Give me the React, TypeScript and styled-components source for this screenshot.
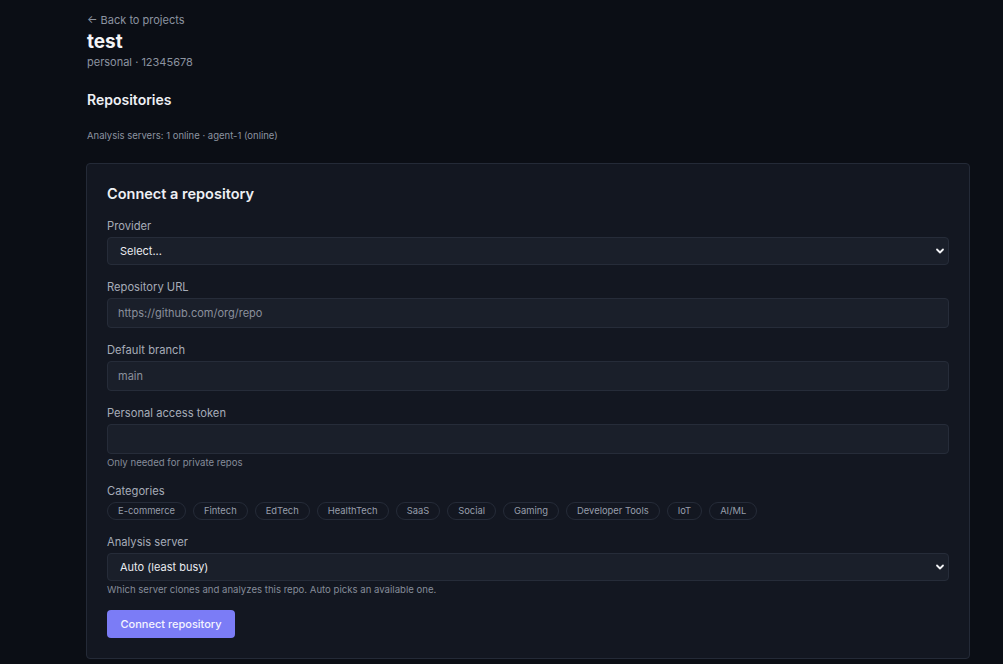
import React from 'react';
import styled, { createGlobalStyle } from 'styled-components';

const GlobalStyle = createGlobalStyle`
    html, body {
        margin: 0;
        padding: 0;
        background: #0b0e15;
    }

    body {
        font-family: Inter, "Noto Sans", "Liberation Sans", sans-serif;
        color: #e6e8ee;
        -webkit-font-smoothing: antialiased;
    }
`;

const Page = styled.main`
    min-height: 664px;
    padding: 12px 33px 4px 86px;
    box-sizing: border-box;
`;

const BackLink = styled.a`
    display: block;
    margin: 1px 0 0 1px;
    font-size: 11px;
    line-height: 14px;
    color: #8c93a0;
    text-decoration: none;
`;

const ProjectTitle = styled.h1`
    margin: 3px 0 0 1px;
    font-size: 19px;
    line-height: 24px;
    font-weight: 700;
    color: #f3f4f7;
`;

const ProjectMeta = styled.div`
    margin: 1px 0 0 1px;
    font-size: 11px;
    line-height: 14px;
    color: #8c93a0;
`;

const SectionTitle = styled.h2`
    margin: 22px 0 0 1px;
    font-size: 14px;
    line-height: 18px;
    font-weight: 600;
    color: #eef0f4;
`;

const ServerStatus = styled.div`
    margin: 21px 0 0 1px;
    font-size: 9.5px;
    line-height: 12px;
    color: #8c93a0;
`;

const Card = styled.section`
    margin-top: 21px;
    padding: 21px 20px 20px;
    background: #131721;
    border: 1px solid #242a37;
    border-radius: 4px;
    display: flex;
    flex-direction: column;
    gap: 15px;
`;

const CardTitle = styled.h3`
    margin: 0 0 1px;
    font-size: 14.5px;
    line-height: 18px;
    font-weight: 600;
    color: #eef0f4;
`;

const Field = styled.div`
    display: flex;
    flex-direction: column;
    gap: 4px;
`;

const Label = styled.label`
    font-size: 11.2px;
    line-height: 14px;
    color: #a6acb8;
`;

const Hint = styled.div`
    margin-top: -1px;
    font-size: 9.6px;
    line-height: 12px;
    color: #858c99;
`;

const controlBase = `
    box-sizing: border-box;
    width: 100%;
    background: #1a1f2a;
    border: 1px solid #262c39;
    border-radius: 4px;
    font-family: Inter, "Noto Sans", "Liberation Sans", sans-serif;
    font-size: 11px;
    outline: none;
`;

const TextInput = styled.input`
    ${controlBase}
    height: 30px;
    padding: 0 10px;
    color: #e6e8ee;

    &::placeholder {
        color: #8a909c;
    }
`;

const SelectWrap = styled.div`
    position: relative;
`;

const Select = styled.select`
    ${controlBase}
    display: block;
    height: 28px;
    padding: 0 28px 0 12px;
    color: #e9ebf0;
    appearance: none;
`;

const Chevron = styled.svg`
    position: absolute;
    right: 4px;
    top: 50%;
    width: 10px;
    height: 10px;
    transform: translateY(-50%);
    pointer-events: none;
`;

const ChipRow = styled.div`
    display: flex;
    flex-wrap: wrap;
    gap: 7px;
`;

const Chip = styled.button<{ $active?: boolean }>`
    height: 18px;
    padding: 0 10px;
    border-radius: 9px;
    border: 1px solid ${p => (p.$active ? '#7b7cf6' : '#252b38')};
    background: ${p => (p.$active ? 'rgba(123, 124, 246, 0.15)' : 'transparent')};
    color: #979eab;
    font-family: Inter, "Noto Sans", "Liberation Sans", sans-serif;
    font-size: 9.4px;
    line-height: 16px;
    cursor: pointer;
`;

const SubmitButton = styled.button`
    align-self: flex-start;
    margin-top: -1px;
    height: 28px;
    padding: 0 13.5px;
    border: none;
    border-radius: 4px;
    background: #7b7cf6;
    color: #f4f4ff;
    font-family: Inter, "Noto Sans", "Liberation Sans", sans-serif;
    font-size: 11px;
    font-weight: 500;
    cursor: pointer;
`;

const CATEGORIES = [
    'E-commerce',
    'Fintech',
    'EdTech',
    'HealthTech',
    'SaaS',
    'Social',
    'Gaming',
    'Developer Tools',
    'IoT',
    'AI/ML',
];

const SelectField = ({ value, options }: { value: string; options: string[] }) => (
    <SelectWrap>
        <Select defaultValue={value}>
            {options.map(o => <option key={o}>{o}</option>)}
        </Select>
        <Chevron viewBox="0 0 10 10">
            <path d="M2 3.5 L5 6.5 L8 3.5" fill="none" stroke="#f2f3f6" strokeWidth="1.8" strokeLinecap="round" strokeLinejoin="round" />
        </Chevron>
    </SelectWrap>
);

export default function App() {
    return (
        <>
            <GlobalStyle />
            <Page>
                <BackLink href="#">← Back to projects</BackLink>
                <ProjectTitle>test</ProjectTitle>
                <ProjectMeta>personal · 12345678</ProjectMeta>

                <SectionTitle>Repositories</SectionTitle>
                <ServerStatus>Analysis servers: 1 online · agent-1 (online)</ServerStatus>

                <Card>
                    <CardTitle>Connect a repository</CardTitle>

                    <Field>
                        <Label>Provider</Label>
                        <SelectField value="Select..." options={['Select...', 'GitHub', 'GitLab', 'Bitbucket']} />
                    </Field>

                    <Field>
                        <Label>Repository URL</Label>
                        <TextInput placeholder="https://github.com/org/repo" />
                    </Field>

                    <Field>
                        <Label>Default branch</Label>
                        <TextInput placeholder="main" />
                    </Field>

                    <Field>
                        <Label>Personal access token</Label>
                        <TextInput type="password" />
                        <Hint>Only needed for private repos</Hint>
                    </Field>

                    <Field>
                        <Label>Categories</Label>
                        <ChipRow>
                            {CATEGORIES.map(c => <Chip key={c}>{c}</Chip>)}
                        </ChipRow>
                    </Field>

                    <Field>
                        <Label>Analysis server</Label>
                        <SelectField value="Auto (least busy)" options={['Auto (least busy)', 'agent-1']} />
                        <Hint>Which server clones and analyzes this repo. Auto picks an available one.</Hint>
                    </Field>

                    <SubmitButton>Connect repository</SubmitButton>
                </Card>
            </Page>
        </>
    );
}
